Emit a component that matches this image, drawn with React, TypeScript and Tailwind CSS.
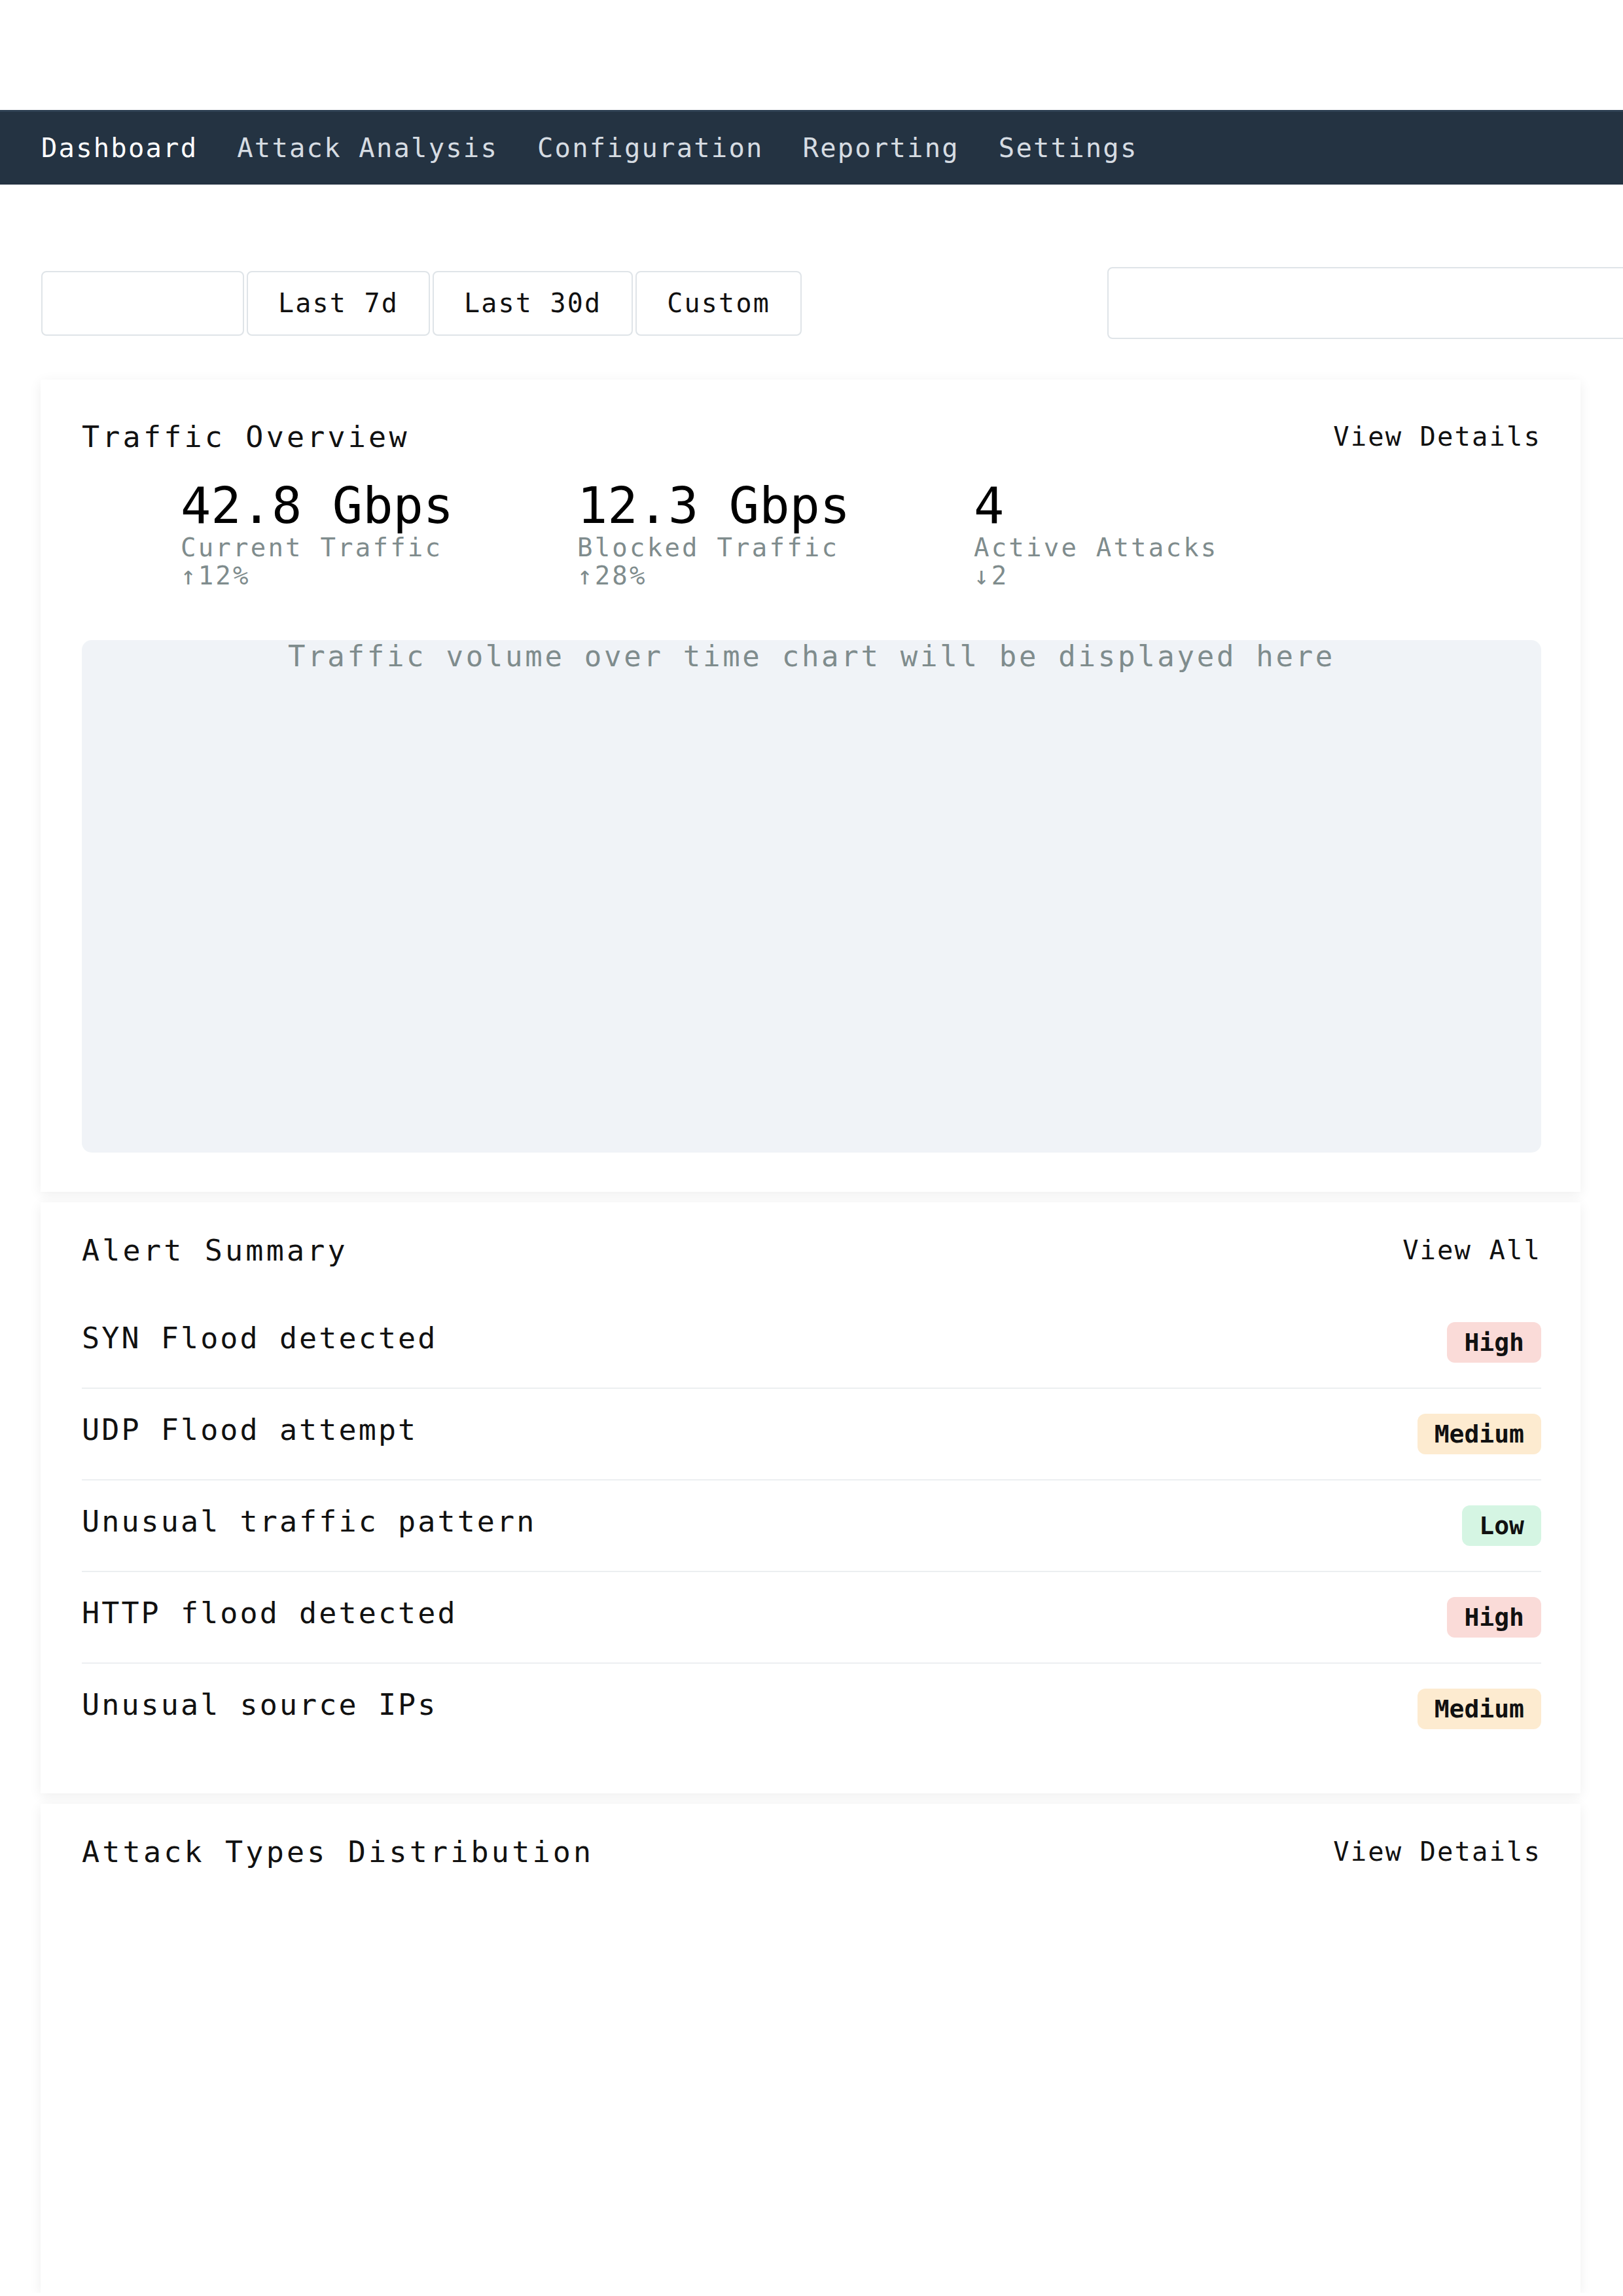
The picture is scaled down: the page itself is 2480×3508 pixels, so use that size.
import React from "react";

const navItems = ["Dashboard", "Attack Analysis", "Configuration", "Reporting", "Settings"];

const alerts = [
  { text: "SYN Flood detected", level: "High" },
  { text: "UDP Flood attempt", level: "Medium" },
  { text: "Unusual traffic pattern", level: "Low" },
  { text: "HTTP flood detected", level: "High" },
  { text: "Unusual source IPs", level: "Medium" },
];

const badgeColor: Record<string, string> = {
  High: "bg-[#fadbd8]",
  Medium: "bg-[#fdebd0]",
  Low: "bg-[#d5f5e3]",
};

const metrics = [
  { value: "42.8 Gbps", label: "Current Traffic", change: "↑12%" },
  { value: "12.3 Gbps", label: "Blocked Traffic", change: "↑28%" },
  { value: "4", label: "Active Attacks", change: "↓2" },
];

const CardHeader = ({ title, link }: { title: string; link: string }) => (
  <div className="flex items-center justify-between">
    <h2 className="text-[45px] leading-[43px] tracking-[4.2px] font-normal text-[#111]">{title}</h2>
    <a href="#" className="text-[40.5px] leading-[43px] tracking-[2.1px] text-[#111]">
      {link}
    </a>
  </div>
);

export default function App() {
  return (
    <div className="w-full overflow-hidden bg-white font-['DejaVu_Sans_Mono',monospace] text-[#111]">
      {/* Header spacer */}
      <div className="h-[168px]"></div>

      {/* Navigation */}
      <nav className="h-[114px] bg-[#243342] border-t-[3px] border-[#2e4053] flex items-center gap-[60px] px-[63px]">
        {navItems.map((item, i) => (
          <a
            key={item}
            href="#"
            className={`text-[40.5px] leading-none tracking-[2.2px] ${i === 0 ? "text-white" : "text-[#d6dce2]"}`}
          >
            {item}
          </a>
        ))}
      </nav>

      {/* Filters */}
      <div className="mt-[126px] flex items-center px-[63px]">
        <div className="flex items-center gap-[4px] shrink-0">
          <button className="w-[310px] h-[99px] bg-white border-2 border-[#dfe4e8] rounded-[8px]"></button>
          {["Last 7d", "Last 30d", "Custom"].map((b) => (
            <button
              key={b}
              className="bg-white border-2 border-[#dfe4e8] rounded-[8px] px-[46px] py-[25px] text-[40px] leading-[45px] tracking-[2.2px] text-[#111]"
            >
              {b}
            </button>
          ))}
        </div>
        <input
          type="text"
          className="ml-[467px] shrink-0 w-[900px] h-[110px] border-2 border-[#dfe4e8] rounded-[8px] bg-white outline-none"
        />
      </div>

      {/* Cards */}
      <div className="mt-[62px] pl-[62px] pr-[65px]">
        {/* Traffic Overview */}
        <section className="bg-white shadow-[0_4px_18px_rgba(0,0,0,0.07)] pt-[66px] pb-[60px] pl-[63px] pr-[60px]">
          <CardHeader title="Traffic Overview" link="View Details" />
          <div className="mt-[42px] flex pl-[151px]">
            {metrics.map((m) => (
              <div key={m.label} className="w-[606px] shrink-0">
                <div className="text-[77px] leading-[84px] text-black">{m.value}</div>
                <div className="text-[39px] leading-[43px] tracking-[3.2px] text-[#7f8c8d]">{m.label}</div>
                <div className="text-[39px] leading-[43px] tracking-[3.2px] text-[#7f8c8d]">{m.change}</div>
              </div>
            ))}
          </div>
          <div className="mt-[77px] h-[783px] rounded-[15px] bg-[#f0f3f7] text-center">
            <p className="text-[44px] leading-[49px] tracking-[3.7px] text-[#7f8c8d]">
              Traffic volume over time chart will be displayed here
            </p>
          </div>
        </section>

        {/* Alert Summary */}
        <section className="mt-[16px] bg-white shadow-[0_4px_18px_rgba(0,0,0,0.07)] pt-[52px] pb-[60px] pl-[63px] pr-[60px]">
          <CardHeader title="Alert Summary" link="View All" />
          <div className="mt-[50px]">
            {alerts.map((a, i) => (
              <div
                key={a.text}
                className={`flex items-start justify-between py-[38px] ${i < alerts.length - 1 ? "border-b-2 border-[#eceff1]" : ""}`}
              >
                <span className="text-[45px] leading-[50px] tracking-[3.1px]">{a.text}</span>
                <span
                  className={`${badgeColor[a.level]} rounded-[12px] px-[26px] py-[8px] text-[38px] leading-[46px] font-bold text-[#111]`}
                >
                  {a.level}
                </span>
              </div>
            ))}
          </div>
        </section>

        {/* Attack Types Distribution */}
        <section className="mt-[16px] bg-white shadow-[0_4px_18px_rgba(0,0,0,0.07)] pt-[52px] pb-[60px] pl-[63px] pr-[60px]">
          <CardHeader title="Attack Types Distribution" link="View Details" />
          <div className="mt-[50px] h-[542px]"></div>
        </section>
      </div>
    </div>
  );
}
